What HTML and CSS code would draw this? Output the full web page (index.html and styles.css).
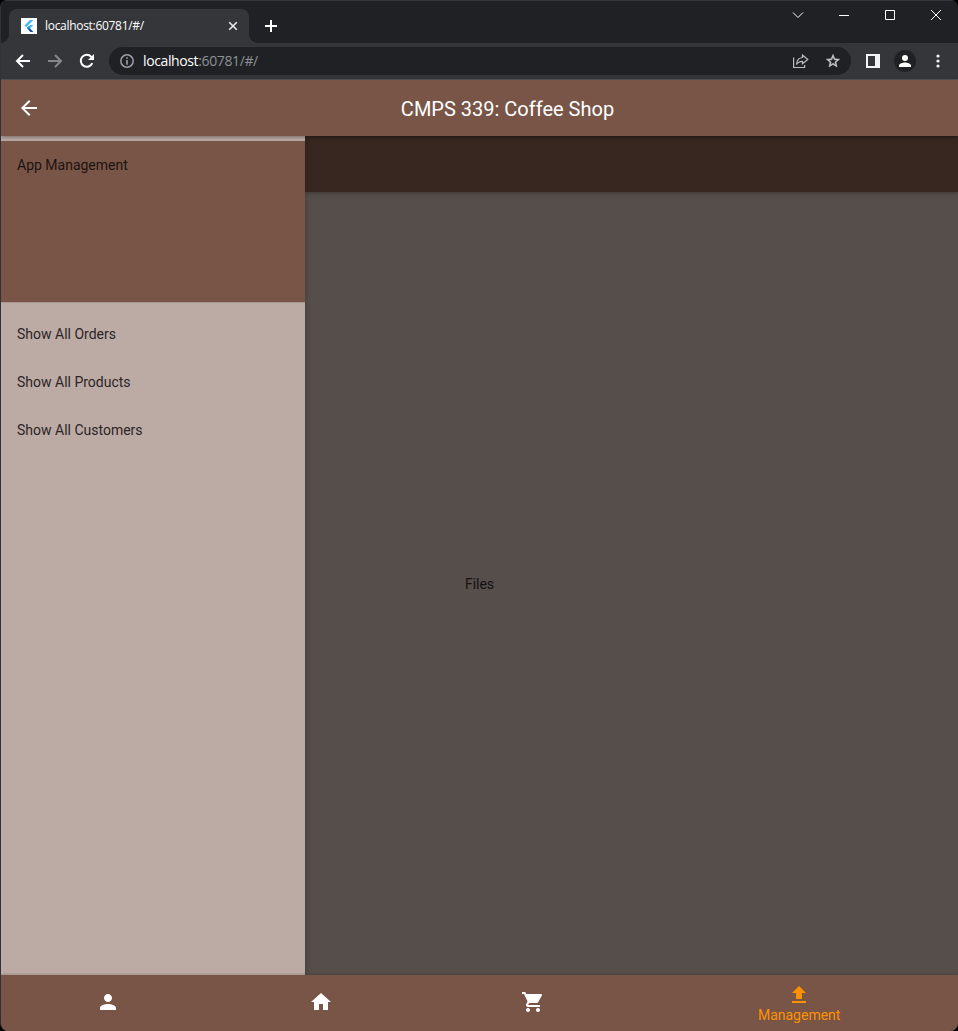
FILE: index.html
```html
<!DOCTYPE html>
<html lang="en">
<head>
<meta charset="utf-8">
<title>CMPS 339: Coffee Shop</title>
<link rel="stylesheet" href="styles.css">
</head>
<body>
<div class="window">
  <header class="tabstrip">
    <div class="tab">
      <svg class="favicon" width="16" height="16" viewBox="0 0 16 16"><path fill="#fff" d="M0 0h16v16H0z"/><path fill="#42b9f5" d="M9 2h3.400L5.200 9.200 3.500 7.500z"/><path fill="#42b9f5" d="M9 7h3.400L9.400 10 7.700 11.700 6 10z"/><path fill="#0b4f9e" d="M7.700 8.400 6 10l3.300 4h3.100L8.900 10.300z"/><path fill="#2196e3" d="m6 10.100 1.700-1.700 1.700 1.700-1.700 1.700z"/></svg>
      <span class="tab-title">localhost:60781/#/</span>
      <svg class="tab-close" width="10" height="10" viewBox="0 0 10 10"><path d="m1.200 1.200 7.600 7.600M8.800 1.200 1.200 8.800" stroke="#e8eaed" stroke-width="1.600"/></svg>
    </div>
    <svg class="new-tab" width="12" height="12" viewBox="0 0 12 12"><path d="M6 0v12M0 6h12" stroke="#fff" stroke-width="2"/></svg>
    <div class="controls">
      <svg width="46" height="30" viewBox="0 0 46 30"><path d="m18 12.500 5 5 5-5"/></svg>
      <svg width="46" height="30" viewBox="0 0 46 30"><path d="M18 15.500h10"/></svg>
      <svg width="46" height="30" viewBox="0 0 46 30"><path d="M18.500 10.500h9v9h-9z"/></svg>
      <svg width="46" height="30" viewBox="0 0 46 30"><path d="m18 10 10 10m0-10L18 20"/></svg>
    </div>
  </header>
  <div class="toolbar">
    <svg class="back" width="16" height="16" viewBox="0 0 16 16"><path d="M15 8H2m6-6L2 8l6 6"/></svg>
    <svg class="forward" width="16" height="16" viewBox="0 0 16 16"><path d="M1 8h13M8 2l6 6-6 6"/></svg>
    <svg class="reload" width="16" height="16" viewBox="0 0 16 16"><path d="M13.300 10.200a6 6 0 1 1-1-6.400l1 1.200"/><path class="solid" d="M15 1v6H9z"/></svg>
    <div class="omnibox">
      <svg width="14" height="14" viewBox="0 0 14 14"><circle cx="7" cy="7" r="6.200" fill="none" stroke="#9aa0a6" stroke-width="1.500"/><path d="M7 3.200v1.600M7 6v4.800" stroke="#9aa0a6" stroke-width="1.600"/></svg>
      <span class="url">localhost<span class="path">:60781/#/</span></span>
      <svg class="share" width="16" height="16" viewBox="0 0 16 16"><path d="M.6 4.500v10h11V12M3.500 11.500c.3-4.500 2-6.700 6-7V2l5.300 4.500L9.500 10.800V8.300c-3 0-4.800 1-6 3.200z"/></svg>
      <svg class="star" width="16" height="16" viewBox="0 0 24 24"><path fill="#c8cacd" d="m22 9.240-7.190-.62L12 2 9.190 8.630 2 9.240l5.460 4.730L5.820 21 12 17.270 18.180 21l-1.630-7.030zM12 15.400l-3.760 2.270 1-4.280-3.320-2.880 4.380-.38L12 6.100l1.710 4.040 4.380.38-3.320 2.880 1 4.280z" stroke="#c8cacd" stroke-width=".7"/></svg>
    </div>
    <svg class="side" width="14" height="14" viewBox="0 0 14 14"><path fill="#f1f3f4" fill-rule="evenodd" d="M0 0h14v14H0zM2 2v10h7V2z"/></svg>
    <div class="avatar"><svg width="12" height="12" viewBox="4 4 16 16"><path fill="#fff" d="M12 12a4 4 0 1 0 0-8 4 4 0 0 0 0 8zm0 2c-2.670 0-8 1.340-8 4v2h16v-2c0-2.660-5.330-4-8-4z"/></svg></div>
    <svg class="more" width="4" height="14" viewBox="0 0 4 14"><g fill="#f1f3f4"><circle cx="2" cy="2" r="1.600"/><circle cx="2" cy="7" r="1.600"/><circle cx="2" cy="12" r="1.600"/></g></svg>
  </div>
  <div class="app">
    <div class="appbar">
      <svg class="app-back" width="24" height="24" viewBox="0 0 24 24"><path fill="#fff" d="M20 11H7.830l5.590-5.590L12 4l-8 8 8 8 1.410-1.410L7.830 13H20v-2z"/></svg>
      <h1 class="title">CMPS 339: Coffee Shop</h1>
    </div>
    <main class="content">
      <aside class="drawer">
        <div class="drawer-header">App Management</div>
        <ul class="menu">
          <li>Show All Orders</li>
          <li>Show All Products</li>
          <li>Show All Customers</li>
        </ul>
      </aside>
      <div class="inner-bar"></div>
      <div class="page"><span>Files</span></div>
    </main>
    <nav class="bottom-nav">
      <div class="nav-item"><svg width="24" height="24" viewBox="0 0 24 24"><path d="M12 12c2.210 0 4-1.790 4-4s-1.790-4-4-4-4 1.790-4 4 1.790 4 4 4zm0 2c-2.670 0-8 1.340-8 4v2h16v-2c0-2.660-5.330-4-8-4z"/></svg></div>
      <div class="nav-item"><svg width="24" height="24" viewBox="0 0 24 24"><path d="M10 20v-6h4v6h5v-8h3L12 3 2 12h3v8z"/></svg></div>
      <div class="nav-item"><svg width="24" height="24" viewBox="0 0 24 24"><path d="M7 18c-1.100 0-1.990.9-1.990 2S5.900 22 7 22s2-.9 2-2-.9-2-2-2zM1 2v2h2l3.600 7.590-1.350 2.450c-.16.280-.25.610-.25.960 0 1.100.9 2 2 2h12v-2H7.420c-.14 0-.25-.11-.25-.25l.03-.12.900-1.630h7.450c.75 0 1.410-.41 1.750-1.030l3.580-6.490c.08-.14.120-.31.120-.48 0-.55-.45-1-1-1H5.210l-.94-2H1zm16 16c-1.100 0-1.990.9-1.990 2s.89 2 1.990 2 2-.9 2-2-.9-2-2-2z"/></svg></div>
      <div class="nav-item active"><svg width="24" height="24" viewBox="0 0 24 24"><path d="M9 16h6v-6h4l-7-7-7 7h4zm-4 2h14v2H5z"/></svg><span>Management</span></div>
    </nav>
  </div>
</div>
</body>
</html>
```
FILE: styles.css
```css
* { box-sizing: border-box; }
body { margin: 0; background: #000; font-family: Roboto, sans-serif; }
svg { display: block; flex: none; }
.window {
  display: flex; flex-direction: column; width: 958px; height: 1031px;
  border-left: 1px solid #303236; border-radius: 7px 7px 8px 8px;
  background: #202124; overflow: hidden;
}
.tabstrip { display: flex; height: 43px; flex: none; border-top: 1px solid #353638; }
.tab {
  position: relative; display: flex; align-items: center;
  width: 240px; height: 34px; margin: 8px 0 0 8px; padding: 0 11px 0 12px;
  background: #35363a; border-radius: 8px 8px 0 0;
}
.tab::before, .tab::after {
  content: ""; position: absolute; bottom: 0; width: 8px; height: 8px;
}
.tab::before { left: -8px; background: radial-gradient(circle at 0 0, transparent 7.500px, #35363a 8px); }
.tab::after { right: -8px; background: radial-gradient(circle at 100% 0, transparent 7.500px, #35363a 8px); }
.tab-title {
  flex: 1; margin-left: 8px; white-space: nowrap;
  font: 12px/16px "Open Sans", sans-serif; letter-spacing: -.3px; color: #fff;
}
.new-tab { margin: 19px 0 0 16px; }
.controls { display: flex; margin: -1px -1px 0 auto; }
.controls path { fill: none; stroke: #fff; stroke-width: 1; }
.toolbar {
  display: flex; align-items: center; height: 37px; flex: none;
  padding: 0 18px 0 14px; background: #35363a; border-bottom: 1px solid #55585c;
}
.back, .forward, .reload { fill: none; stroke: #fff; stroke-width: 2; }
.forward { margin-left: 16px; stroke: #85878b; }
.reload { margin-left: 16px; }
.reload .solid { fill: #fff; stroke: none; }
.omnibox {
  display: flex; align-items: center; width: 742px; height: 28px;
  margin-left: 14px; padding: 0 10px 0 11px; border-radius: 14px; background: #202124;
}
.url {
  margin-left: 9px; color: #fff; white-space: nowrap;
  font: 14px/20px "Open Sans", sans-serif; letter-spacing: -.38px;
}
.path { color: #8d9196; }
.share { margin-left: auto; fill: none; stroke: #b9bbbe; stroke-width: 1.200; }
.star { margin-left: 16px; }
.side { margin-left: 15px; }
.avatar {
  display: flex; align-items: center; justify-content: center;
  width: 22px; height: 22px; margin-left: 14px; border-radius: 50%; background: #202124;
}
.more { margin-left: auto; margin-right: .5px; }
.app { flex: 1; display: flex; flex-direction: column; background: #564e4b; }
.appbar {
  display: grid; grid-template-columns: 56px 1fr; align-items: center;
  height: 56px; background: #795548; z-index: 3;
  box-shadow: 0 1px 4px rgba(0, 0, 0, .4);
}
.app-back { margin-left: 16px; }
.title { margin: 2px 0 0; text-align: center; font-size: 20px; line-height: 24px; font-weight: 400; color: #fff; }
.content {
  flex: 1; display: grid; grid-template-columns: 304px 1fr; grid-template-rows: 56px 1fr;
  position: relative; z-index: 1; font-size: 14px; line-height: 16px;
}
.drawer {
  grid-row: 1 / 3; grid-column: 1; z-index: 2; padding-top: 5px;
  background: #bcaaa4; box-shadow: 1px 0 5px rgba(0, 0, 0, .2); color: #2b2524;
}
.drawer-header {
  height: 162px; padding: 16px; color: #1c1310;
  background: #795548; border-bottom: 1px solid #a8958e;
}
.menu { margin: 7px 0 0; padding: 0; list-style: none; }
.menu li { display: flex; align-items: center; height: 48px; padding-left: 16px; }
.inner-bar { grid-column: 2; background: #382721; box-shadow: 0 1px 4px rgba(0, 0, 0, .3); }
.page {
  grid-row: 2; grid-column: 1 / 3; display: flex;
  align-items: center; justify-content: center; color: #141111;
}
.bottom-nav {
  display: flex; height: 56px; background: #795548; z-index: 3;
  box-shadow: 0 -1px 2px rgba(0, 0, 0, .15);
}
.nav-item {
  flex: 1; display: flex; flex-direction: column; align-items: center;
  padding: 15px 0 0 1px; font-size: 14px; line-height: 16px; color: #ff9100;
}
.nav-item svg { fill: #fff; }
.nav-item.active { flex-grow: 1.500; padding: 8px 0 0 1px; }
.nav-item.active svg { fill: #ff9100; }
```
